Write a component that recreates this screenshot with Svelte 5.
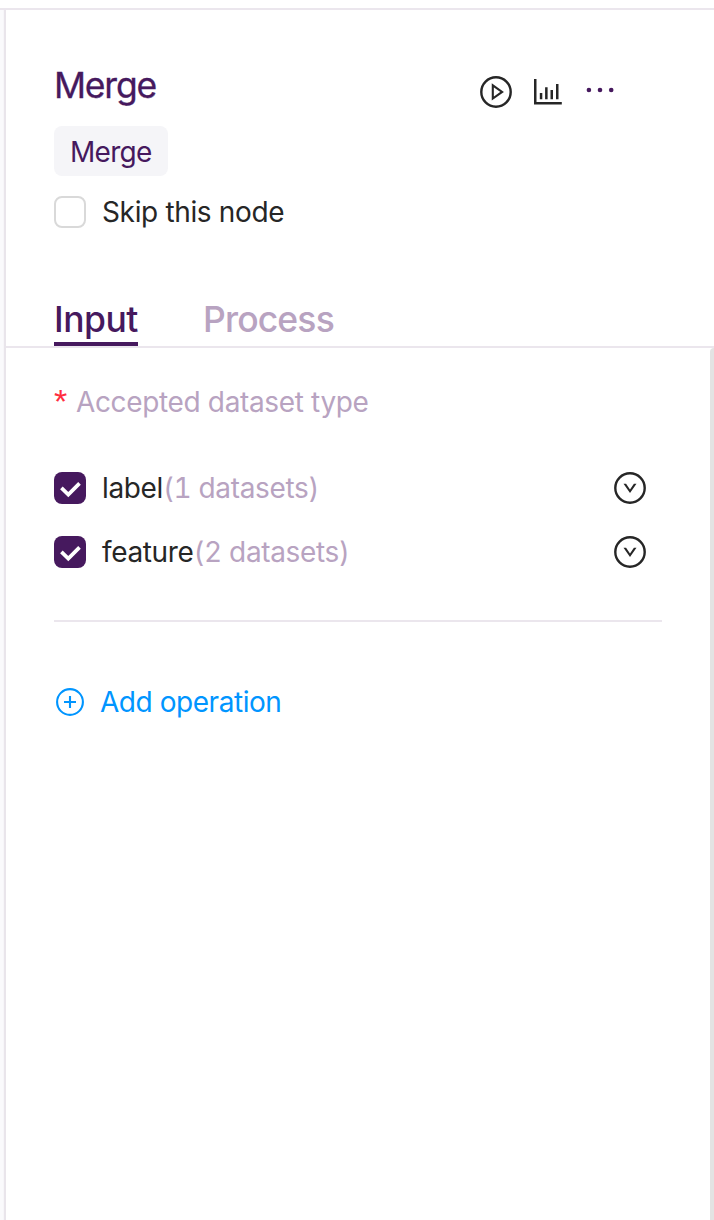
<script>
  const datasets = [
    { name: 'label', count: 1 },
    { name: 'feature', count: 2 }
  ];
</script>

<div class="page">
  <aside class="panel">
    <header>
      <div class="titles">
        <h1><span>Merge</span></h1>
        <span class="tag"><span>Merge</span></span>
        <label class="skip"><i class="box"></i><span>Skip this node</span></label>
      </div>
      <div class="actions">
        <svg width="32" height="32" viewBox="0 0 32 32" fill="none" stroke="#262626" stroke-width="2.4">
          <circle cx="16" cy="16" r="14.7" />
          <path d="M12.8 9.3v13.2l9.3-6.6z" stroke-width="2.1" />
        </svg>
        <svg width="28" height="28" viewBox="0 0 28 28" fill="#262626">
          <path d="M0 1h2.5v23H27.8v2.4H0zM5.8 14.9h2.5v6.3H5.8zM11.1 9.2h2.5v12h-2.5zM16.5 12h2.5v9.2h-2.5zM22 6h2.5v15.2H22z" />
        </svg>
        <svg width="28" height="28" viewBox="0 0 28 28" fill="#46195e">
          <circle cx="2.9" cy="12" r="2.3" /><circle cx="14" cy="12" r="2.3" /><circle cx="25.2" cy="12" r="2.3" />
        </svg>
      </div>
    </header>
    <nav>
      <button class="active"><span>Input</span></button>
      <button class="process"><span>Process</span></button>
    </nav>
    <main>
      <p class="legend"><b>*</b><span>Accepted dataset type</span></p>
      <section>
        {#each datasets as item}
          <div class="row">
            <svg width="32" height="32" viewBox="0 0 32 32">
              <rect width="32" height="32" rx="8" fill="#46195e" />
              <path d="M7.4 15.9l6.9 6.7L25.5 11.4" fill="none" stroke="#fff" stroke-width="3.7" />
            </svg>
            <span class="name">{item.name}</span><span class="count">({item.count} datasets)</span>
            <svg class="expand" width="32" height="32" viewBox="0 0 32 32" fill="none" stroke="#262626">
              <circle cx="16" cy="16" r="14.7" stroke-width="2.4" />
              <path d="M9.5 11.8h2.6l3.9 5.8 3.9-5.8h2.6L16 21z" fill="#262626" stroke="none" />
            </svg>
          </div>
        {/each}
      </section>
      <button class="add">
        <svg width="28" height="28" viewBox="0 0 28 28" fill="none" stroke="#0095ff" stroke-width="2.1">
          <circle cx="14" cy="14" r="12.9" /><path d="M14 8v12M8 14h12" />
        </svg>
        <span>Add operation</span>
      </button>
      <i class="scrollbar"></i>
    </main>
  </aside>
</div>

<style>
  :global(body) { margin: 0; background: #fff; }
  .page {
    box-sizing: border-box;
    height: 1220px;
    padding-top: 8px;
    overflow: hidden;
    font: 28px/40px Inter, "Liberation Sans", sans-serif;
    letter-spacing: -0.35px;
    color: #262626;
    background: #fff;
  }
  .panel {
    box-sizing: border-box;
    height: 1212px;
    border-top: 2px solid #ebe6ed;
    display: flex;
    flex-direction: column;
    background: linear-gradient(90deg, #fafafc 0 3px, #f4f2f6 4px, #e9e5eb 4px 6px, #fff 6px);
    padding-left: 6px;
  }
  header {
    display: flex;
    justify-content: space-between;
    height: 278px;
    box-sizing: border-box;
    padding: 54px 100px 0 48px;
  }
  h1 { margin: 0; font-size: 35.5px; line-height: 44px; font-weight: 400; color: #46195e; letter-spacing: -1.2px; -webkit-text-stroke: 0.3px #46195e; }
  .titles { display: flex; flex-direction: column; align-items: flex-start; }
  .tag {
    box-sizing: border-box;
    width: 114px;
    height: 50px;
    margin-top: 18px;
    padding: 6px 0 0 16px;
    border-radius: 8px;
    background: #f5f5f8;
    color: #46195e;
    letter-spacing: -0.7px;
  }
  .skip { display: flex; align-items: center; gap: 16px; margin-top: 16px; }
  .box { box-sizing: border-box; width: 32px; height: 32px; border: 2px solid #d9d9d9; border-radius: 8px; }
  .actions { display: flex; align-items: flex-start; padding-top: 12px; gap: 22px; }
  .actions svg:nth-child(n + 2) { margin-top: 2px; }
  .actions svg:last-child { margin-left: 2px; }
  nav {
    display: flex;
    gap: 65px;
    height: 60px;
    box-sizing: border-box;
    padding-left: 48px;
    border-bottom: 2px solid #ebe6ed;
  }
  button { border: 0; padding: 0; background: none; font: inherit; letter-spacing: inherit; cursor: pointer; text-align: left; }
  nav button {
    box-sizing: border-box;
    height: 58px;
    font-size: 35.5px;
    line-height: 44px;
    font-weight: 500;
    padding-top: 10px;
    display: flex;
    color: #b8a3c1;
    white-space: nowrap;
    letter-spacing: -0.85px;
  }
  nav .active { width: 84px; color: #46195e; border-bottom: 4px solid #46195e; letter-spacing: -0.5px; }
  main { position: relative; flex: 1; padding: 34px 52px 0 48px; }
  .legend { margin: 0; display: flex; color: #b8a3c1; }
  .legend b { width: 22px; color: #ff2d3f; font: 34px/38px "Liberation Sans", sans-serif; height: 40px; }
  section { margin-top: 46px; padding-bottom: 48px; border-bottom: 2px solid #ebe6ed; }
  .row { display: flex; align-items: center; height: 40px; margin-bottom: 24px; }
  .row:last-child { margin-bottom: 0; }
  .name { margin-left: 16px; }
  .count { color: #b8a3c1; font-variant-numeric: tabular-nums; }
  .expand { margin-left: auto; margin-right: 16px; }
  .add { display: flex; align-items: center; gap: 16px; margin: 60px 0 0 2px; color: #0095ff; letter-spacing: -0.45px; }
  .scrollbar { position: absolute; top: 0; right: 0; width: 4px; height: 100%; border-radius: 4px 0 0 0; background: #e3e3e3; }
</style>
